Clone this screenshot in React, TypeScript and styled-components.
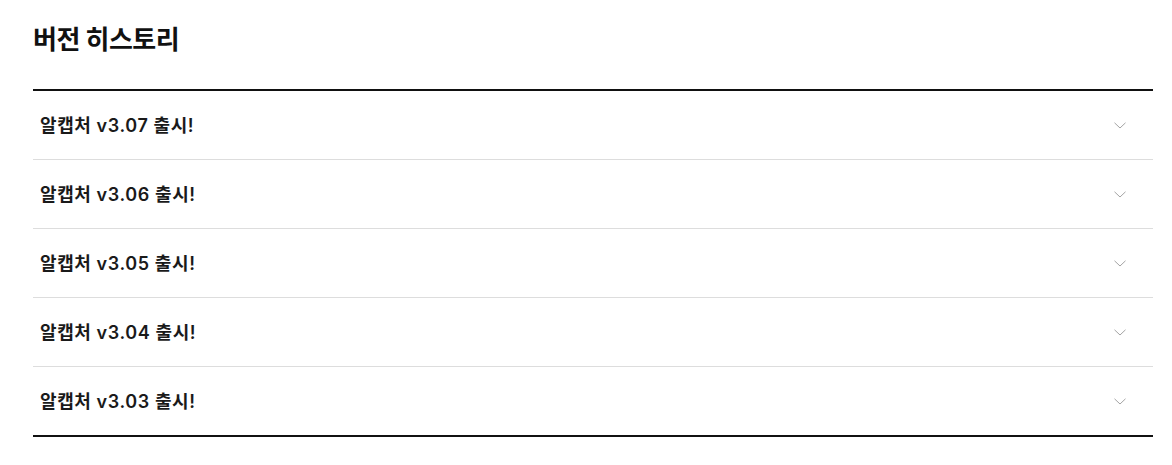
import React from 'react';
import styled, { createGlobalStyle } from 'styled-components';

const GlobalStyle = createGlobalStyle`
    body {
        margin: 0;
        background: #ffffff;
        font-family: "Inter", "Noto Sans CJK KR", sans-serif;
        color: #111111;
    }
`;

const Page = styled.div`
    padding: 22px 0 0 33px;
`;

const Title = styled.h2`
    margin: 0;
    width: 1120px;
    font-size: 26px;
    font-weight: 700;
    line-height: 36px;
    letter-spacing: -0.5px;
    padding-bottom: 31px;
    border-bottom: 2px solid #111111;
`;

const List = styled.ul`
    list-style: none;
    margin: 0;
    padding: 0;
    width: 1120px;
    border-bottom: 2px solid #111111;
`;

const Item = styled.li`
    display: flex;
    align-items: center;
    justify-content: space-between;
    height: 68px;
    padding: 0 27px 0 7px;
    border-top: 1px solid #dddddd;

    &:first-child {
        border-top: none;
    }
`;

const ItemTitle = styled.span`
    font-size: 18px;
    font-weight: 600;
    letter-spacing: 0.6px;
    color: #1a1a1a;
    margin-top: -2px;
`;

const Chevron = () => (
    <svg width="12" height="7" viewBox="0 0 12 7" fill="none">
        <path d="M0.5 0.8 L6 6 L11.5 0.8" stroke="#a3a3a3" strokeWidth="1" />
    </svg>
);

const versions = ['3.07', '3.06', '3.05', '3.04', '3.03'];

const App = () => {
    return (
        <Page>
            <GlobalStyle />
            <Title>버전 히스토리</Title>
            <List>
                {versions.map((v) => (
                    <Item key={v}>
                        <ItemTitle>알캡처 v{v} 출시!</ItemTitle>
                        <Chevron />
                    </Item>
                ))}
            </List>
        </Page>
    );
};

export default App;
